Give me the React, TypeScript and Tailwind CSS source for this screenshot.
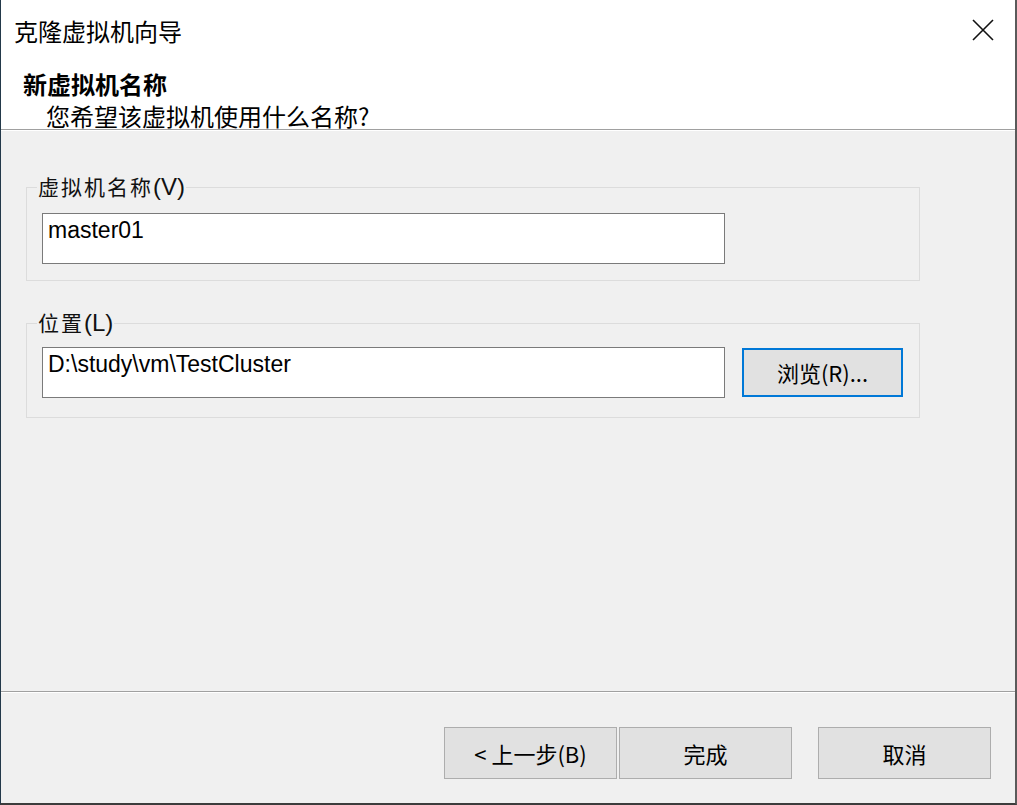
import React from 'react';

const cjk = "font-['Noto_Sans_CJK_SC',sans-serif]";
const latin = "font-['Liberation_Sans','Noto_Sans_CJK_SC',sans-serif]";

const GroupLabel: React.FC<{ zh: string; key2: string }> = ({ zh, key2 }) => (
  <legend className="px-[1px] leading-[28px] text-[#111]">
    <span className={`${cjk} text-[21px] tracking-[2px]`}>{zh}</span>
    <span className={`${latin} text-[24px]`}>{key2}</span>
  </legend>
);

const TextBox: React.FC<{ value: string }> = ({ value }) => (
  <div
    className={`${latin} w-[683px] h-[51px] shrink-0 border border-[#7a7a7a] bg-white px-[5px] pt-[2px] text-[23px] leading-[28px] text-black`}
  >
    {value}
  </div>
);

const DialogButton: React.FC<{ label: string; className?: string }> = ({ label, className = '' }) => (
  <button
    className={`${cjk} w-[173px] h-[52px] border border-[#adadad] bg-[#e1e1e1] text-[22px] text-black ${className}`}
  >
    {label}
  </button>
);

export default function App() {
  return (
    <div className="w-[1017px] h-[805px] flex flex-col bg-[#f0f0f0] border-l border-l-[#23394a] border-r-2 border-r-[#5a5a5a] border-b-2 border-b-[#3c3c3c] overflow-hidden">
      {/* Header */}
      <div className="bg-white border-b border-b-[#a0a0a0] pb-[1px]">
        <div className="h-[62px] flex items-center justify-between pl-[13px] pr-[21px]">
          <span className={`${cjk} text-[24px] text-black`}>克隆虚拟机向导</span>
          <svg width="22" height="22" viewBox="0 0 22 22" className="mt-[-2px]">
            <path d="M1 1 L21 21 M21 1 L1 21" stroke="#111" strokeWidth="1.6" fill="none" />
          </svg>
        </div>
        <div className={`${cjk} pl-[22px] mt-[8px] text-[24px] font-bold leading-[28px] text-black`}>
          新虚拟机名称
        </div>
        <div className={`${cjk} pl-[45px] mt-[6px] text-[24px] leading-[24px] text-black`}>
          您希望该虚拟机使用什么名称?
        </div>
      </div>
      <div className="h-px bg-white" />

      {/* Body */}
      <div className="flex-1 flex flex-col pl-[25px]">
        <fieldset className="mt-[41px] w-[894px] border border-[#dcdcdc] pl-[10px] pb-[16px]">
          <GroupLabel zh="虚拟机名称" key2="(V)" />
          <div className="mt-[10px] ml-[5px]">
            <TextBox value="master01" />
          </div>
        </fieldset>

        <fieldset className="mt-[27px] w-[894px] border border-[#dcdcdc] pl-[10px] pb-[19px]">
          <GroupLabel zh="位置" key2="(L)" />
          <div className="mt-[8px] ml-[5px] flex items-start">
            <TextBox value="D:\study\vm\TestCluster" />
            <button
              className={`${cjk} ml-[17px] mt-[1px] w-[161px] h-[49px] border-2 border-[#0078d7] bg-[#e1e1e1] text-[22px] text-black`}
            >
              浏览(R)...
            </button>
          </div>
        </fieldset>
      </div>

      {/* Footer */}
      <div className="h-px bg-[#a0a0a0]" />
      <div className="h-px bg-white" />
      <div className="h-[110px] flex items-start justify-end pr-[24px] pt-[34px]">
        <DialogButton label="< 上一步(B)" />
        <DialogButton label="完成" className="ml-[2px]" />
        <DialogButton label="取消" className="ml-[26px]" />
      </div>
    </div>
  );
}
